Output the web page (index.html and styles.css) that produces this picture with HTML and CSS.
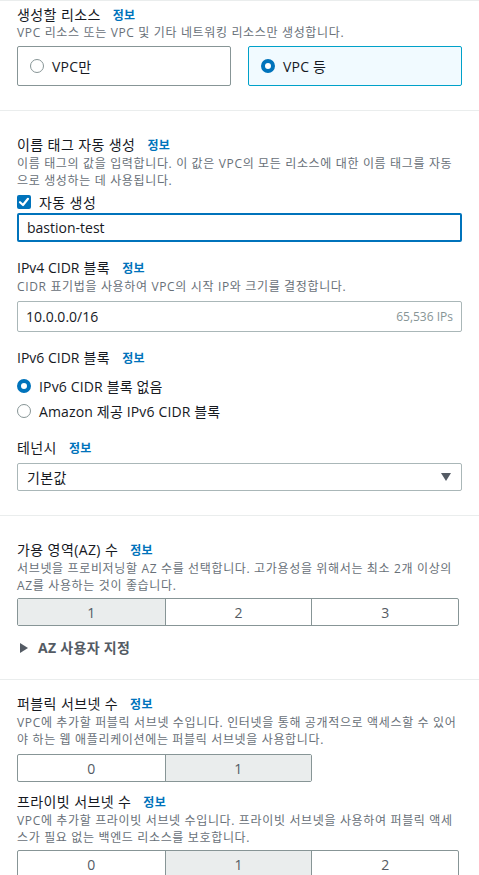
FILE: index.html
```html
<!DOCTYPE html>
<html lang="ko">
<head>
<meta charset="utf-8">
<link rel="stylesheet" href="styles.css">
</head>
<body>
<div class="page">
  <section class="sec sec1">
    <div class="label">생성할 리소스 <a class="info">정보</a></div>
    <div class="desc">VPC 리소스 또는 VPC 및 기타 네트워킹 리소스만 생성합니다.</div>
    <div class="tiles">
      <div class="tile"><span class="radio"></span><span>VPC만</span></div>
      <div class="tile sel"><span class="radio on"></span><span>VPC 등</span></div>
    </div>
  </section>

  <section class="sec sec2">
    <div class="label">이름 태그 자동 생성 <a class="info">정보</a></div>
    <div class="desc">이름 태그의 값을 입력합니다. 이 값은 VPC의 모든 리소스에 대한 이름 태그를 자동으로 생성하는 데 사용됩니다.</div>
    <div class="check-row">
      <span class="checkbox"><svg viewBox="0 0 14 14" width="14" height="14"><path d="M3 7.2 L6 10 L11 3.8" fill="none" stroke="#fff" stroke-width="2.2" stroke-linecap="round" stroke-linejoin="round"/></svg></span>
      <span>자동 생성</span>
    </div>
    <div class="input focus">bastion-test</div>

    <div class="label mt16"><span class="en">IPv4 CIDR</span> 블록 <a class="info">정보</a></div>
    <div class="desc">CIDR 표기법을 사용하여 VPC의 시작 IP와 크기를 결정합니다.</div>
    <div class="input cidr"><span>10.0.0.0/16</span><span class="hint">65,536 IPs</span></div>

    <div class="label mt16"><span class="en">IPv6 CIDR</span> 블록 <a class="info">정보</a></div>
    <div class="radios">
      <div class="radio-row"><span class="radio on"></span><span>IPv6 CIDR 블록 없음</span></div>
      <div class="radio-row"><span class="radio"></span><span>Amazon 제공 IPv6 CIDR 블록</span></div>
    </div>

    <div class="label mt15">테넌시 <a class="info">정보</a></div>
    <div class="select"><span>기본값</span><span class="caret"></span></div>
  </section>

  <section class="sec sec3">
    <div class="label">가용 영역(AZ) 수 <a class="info">정보</a></div>
    <div class="desc">서브넷을 프로비저닝할 AZ 수를 선택합니다. 고가용성을 위해서는 최소 2개 이상의 AZ를 사용하는 것이 좋습니다.</div>
    <div class="seg seg3">
      <div class="opt on">1</div>
      <div class="opt">2</div>
      <div class="opt">3</div>
    </div>
    <div class="expander"><span class="tri"></span>AZ 사용자 지정</div>
  </section>

  <section class="sec sec4">
    <div class="label">퍼블릭 서브넷 수 <a class="info">정보</a></div>
    <div class="desc">VPC에 추가할 퍼블릭 서브넷 수입니다. 인터넷을 통해 공개적으로 액세스할 수 있어야 하는 웹 애플리케이션에는 퍼블릭 서브넷을 사용합니다.</div>
    <div class="seg seg2">
      <div class="opt">0</div>
      <div class="opt on">1</div>
    </div>

    <div class="label mt10">프라이빗 서브넷 수 <a class="info">정보</a></div>
    <div class="desc">VPC에 추가할 프라이빗 서브넷 수입니다. 프라이빗 서브넷을 사용하여 퍼블릭 액세스가 필요 없는 백엔드 리소스를 보호합니다.</div>
    <div class="seg seg3 last">
      <div class="opt">0</div>
      <div class="opt on">1</div>
      <div class="opt">2</div>
    </div>
  </section>
</div>
</body>
</html>
```

FILE: styles.css
```css
* { box-sizing: border-box; }
html, body { margin: 0; padding: 0; background: #fff; }
body {
  font-family: "Open Sans", "Noto Sans CJK KR", sans-serif;
  color: #16191f;
  font-size: 14px;
  width: 479px;
  overflow: hidden;
}
.page { border-top: 1px solid #eaeded; }
.sec { padding: 0 17px; border-bottom: 1px solid #eaeded; display: flex; flex-direction: column; }
.sec1 { padding-top: 4px; padding-bottom: 24px; }
.sec2 { padding-top: 24px; padding-bottom: 24px; }
.sec3 { padding-top: 24px; padding-bottom: 21px; }
.sec4 { padding-top: 14px; padding-bottom: 40px; border-bottom: none; }

.label { font-size: 14px; line-height: 20px; height: 20px; color: #16191f; white-space: nowrap; letter-spacing: 0.4px; }
.label .en { letter-spacing: 0; }
.info { color: #0073bb; font-weight: 700; font-size: 12px; margin-left: 8px; letter-spacing: 0.3px; }
.desc { font-size: 12px; line-height: 17px; color: #687078; letter-spacing: 0.65px; }
.sec1 .desc { line-height: 16px; }
.mt16 { margin-top: 16px; }
.mt15 { margin-top: 15px; }
.mt10 { margin-top: 10px; }

.tiles { display: grid; grid-template-columns: 1fr 1fr; gap: 17px; margin-top: 5px; }
.tile {
  height: 40px; border: 1px solid #879596; border-radius: 2px;
  display: flex; align-items: center; gap: 8px; padding-left: 12px;
  font-size: 14px; letter-spacing: 0.2px;
}
.tile.sel { background: #f1faff; border-color: #00a1c9; }

.radio {
  width: 14px; height: 14px; border-radius: 50%;
  border: 1px solid #879596; background: #fff; flex: none; display: inline-block;
}
.radio.on { border: 4px solid #0073bb; }

.check-row { display: flex; align-items: center; gap: 8px; height: 20px; margin-top: 3px; font-size: 14px; letter-spacing: 0.4px; }
.checkbox { width: 14px; height: 14px; background: #0073bb; border-radius: 2px; display: inline-flex; }

.input {
  height: 31px; border: 1px solid #aab7b8; border-radius: 2px;
  display: flex; align-items: center; padding: 0 8px; font-size: 14px;
  margin-top: 6px;
}
.input.focus { height: 29px; border: 2px solid #0073bb; padding-left: 8px; margin-top: 1px; }
.cidr { justify-content: space-between; }
.hint { color: #879596; font-size: 12px; padding-right: 0; }

.radios { margin-top: 5px; display: flex; flex-direction: column; }
.radio-row { height: 25px; display: flex; align-items: center; gap: 8px; font-size: 14px; letter-spacing: 0.15px; }

.select {
  height: 28px; margin-top: 5px; border: 1px solid #aab7b8; border-radius: 2px;
  display: flex; align-items: center; justify-content: space-between; padding: 0 10px 0 9px;
  letter-spacing: 0.4px;
}
.caret { width: 0; height: 0; border-left: 5.5px solid transparent; border-right: 5.5px solid transparent; border-top: 8px solid #545b64; }

.seg { display: grid; margin-top: 4px; height: 28px; border: 1px solid #879596; border-radius: 2px; }
.seg3 { grid-template-columns: 1fr 1fr 1fr; width: 442px; }
.seg2 { grid-template-columns: 1fr 1fr; width: 295px; margin-top: 6px; }
.opt { display: flex; align-items: center; justify-content: center; font-size: 14px; color: #545b64; border-left: 1px solid #879596; }
.opt:first-child { border-left: none; }
.opt.on { background: #eaeded; }

.expander { margin-top: 12px; height: 20px; line-height: 20px; font-weight: 700; font-size: 14px; color: #545b64; display: flex; align-items: center; letter-spacing: 0.3px; }
.tri { width: 0; height: 0; border-top: 5px solid transparent; border-bottom: 5px solid transparent; border-left: 8px solid #545b64; margin: 0 10px 0 3px; }
```
